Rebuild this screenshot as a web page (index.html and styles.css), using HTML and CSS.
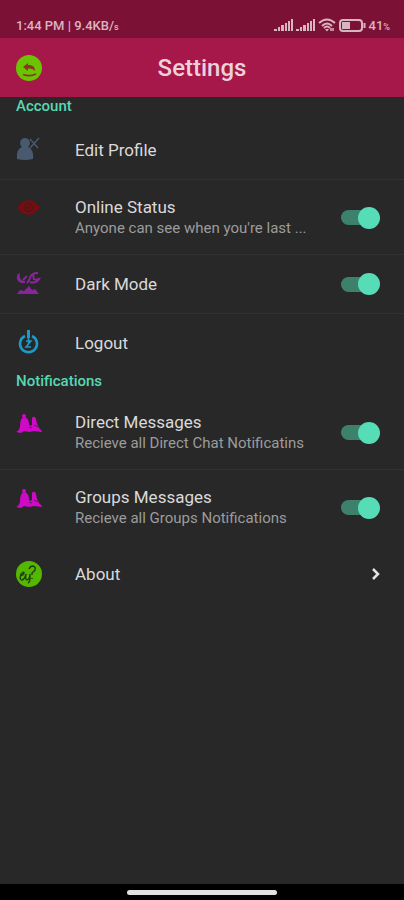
FILE: index.html
```html
<!DOCTYPE html>
<html lang="en">
<head>
  <meta charset="UTF-8" />
  <meta name="viewport" content="width=device-width, initial-scale=1" />
  <title>Settings</title>
  <link rel="stylesheet" href="styles.css">
</head>
<body>

  <div class="status-bar">
    <span>1:44 PM | 9.4KB/<small>s</small></span>
    <div class="status-icons">
      <svg width="19" height="12" viewBox="0 0 19 12" fill="currentColor">
        <path d="M0 10h3v2H0zM4 8h2v4H4zM7 6h3v6H7zM11 4h2v8h-2zM14 2h2v10h-2zM17 0h2v12h-2z"/>
      </svg>
      <svg width="19" height="12" viewBox="0 0 19 12" fill="currentColor">
        <path d="M0 10h3v2H0zM4 8h2v4H4zM7 6h3v6H7zM11 4h2v8h-2zM14 2h2v10h-2zM17 0h2v12h-2z"/>
      </svg>
      <svg width="18" height="14" viewBox="0 0 18 14" fill="none" stroke="currentColor" stroke-width="2">
        <path d="M1 5Q9-2 17 5M4 8Q9 3 14 8M6 10Q9 7 12 10"/>
        <path d="M7 11h4l-2 2.500z" fill="currentColor" stroke="none"/>
        <path d="M13 10v3M15 10v3" stroke-width="1.500"/>
      </svg>
      <svg width="27" height="13" viewBox="0 0 27 13" fill="none" stroke="currentColor" stroke-width="2">
        <rect x="1" y="1" width="22" height="11" rx="3"/>
        <path d="M3 3h8v7H3z" fill="currentColor" stroke="none"/>
        <path d="M25.500 4v5"/>
      </svg>
      <span>41<small>%</small></span>
    </div>
  </div>

  <header class="app-bar">
    <button class="back" type="button" aria-label="Back">
      <svg width="26" height="26" viewBox="0 0 26 26">
        <circle cx="13" cy="13" r="13" fill="#6bc400"/>
        <path d="M7 12l5-4v2c5 0 7 2 7 6-2-2-4-2.500-7-2.500V16z" fill="#8b3526"/>
        <path d="M7 19.500q7 2.500 13-.5" fill="none" stroke="#8b3526" stroke-width="1.800"/>
      </svg>
    </button>
    <h1>Settings</h1>
  </header>

  <main>
    <h2>Account</h2>
    <ul>
      <li>
        <a class="row" href="#profile">
          <svg class="icon" viewBox="0 0 26 26">
            <circle cx="9" cy="6" r="5" fill="#485970"/>
            <path d="M1 22q-1-10 5-12h6q6 2 5 12-8 2-16 0z" fill="#485970"/>
            <path d="M14 2l8 9M23 1l-9 10" stroke="#485970" stroke-width="1.500"/>
          </svg>
          <span class="text"><span class="title">Edit Profile</span></span>
        </a>
      </li>
      <li>
        <label class="row two-line">
          <svg class="icon" viewBox="0 0 26 26">
            <path d="M1 12.500Q12-2 24 12.500 12 27 1 12.500z" fill="#780d10"/>
            <circle cx="12.500" cy="12.500" r="4" fill="none" stroke="#4a1819" stroke-width="1.500"/>
            <circle cx="12.500" cy="12.500" r="1.500" fill="#4a1819"/>
          </svg>
          <span class="text">
            <span class="title">Online Status</span>
            <span class="subtitle">Anyone can see when you're last ...</span>
          </span>
          <input class="switch" type="checkbox" checked>
        </label>
      </li>
      <li>
        <label class="row">
          <svg class="icon" viewBox="0 0 26 26" fill="#8a249c">
            <path d="M4 2Q0 3 1 8q2 5 8 4v-2Q5 10 4 7q-1-3 0-5z"/>
            <path d="M1 23l3-4 4 1 5-5 3 4 3-1 4 5z"/>
            <path d="M22 2q-7 0-8 5-1 3-3 5M14 11q6 2 9-3l-4 1M17 3l1 6" fill="none" stroke="#8a249c" stroke-width="2"/>
            <path d="M7 9l4-4" stroke="#8a249c" stroke-width="2"/>
          </svg>
          <span class="text"><span class="title">Dark Mode</span></span>
          <input class="switch" type="checkbox" checked>
        </label>
      </li>
      <li>
        <a class="row" href="#logout">
          <svg class="icon" viewBox="0 0 26 26" fill="none" stroke="#1d9ac6">
            <path d="M9 6a8.500 8.500 0 1 0 7 0" stroke-width="2.500"/>
            <path d="M12.500 0v8" stroke-width="3"/>
            <path d="M10 11h5l-5 6h5M12.500 8v6" stroke-width="1.500"/>
          </svg>
          <span class="text"><span class="title">Logout</span></span>
        </a>
      </li>
    </ul>

    <h2>Notifications</h2>
    <ul>
      <li>
        <label class="row two-line">
          <svg class="icon bells" viewBox="0 0 26 26" fill="#d008c8">
            <circle cx="8" cy="4" r="2"/>
            <path d="M0 20q4-2 4-6 0-8 4-9 5 1 5 7l1 2 2-1V6q1-2 3-1 1 1 2 7l2 4 3 3v1l-8-1-5 1-5-1-3 2z"/>
            <path d="M13 15l3 1M18 13l4 2" stroke="#282828" stroke-width=".7"/>
          </svg>
          <span class="text">
            <span class="title">Direct Messages</span>
            <span class="subtitle">Recieve all Direct Chat Notificatins</span>
          </span>
          <input class="switch" type="checkbox" checked>
        </label>
      </li>
      <li>
        <label class="row two-line">
          <svg class="icon bells" viewBox="0 0 26 26" fill="#d008c8">
            <circle cx="8" cy="4" r="2"/>
            <path d="M0 20q4-2 4-6 0-8 4-9 5 1 5 7l1 2 2-1V6q1-2 3-1 1 1 2 7l2 4 3 3v1l-8-1-5 1-5-1-3 2z"/>
            <path d="M13 15l3 1M18 13l4 2" stroke="#282828" stroke-width=".7"/>
          </svg>
          <span class="text">
            <span class="title">Groups Messages</span>
            <span class="subtitle">Recieve all Groups Notifications</span>
          </span>
          <input class="switch" type="checkbox" checked>
        </label>
      </li>
    </ul>

    <a class="row" href="#about">
      <svg class="icon" viewBox="0 0 26 26">
        <circle cx="13" cy="13" r="13" fill="#55b800"/>
        <path d="M4 15q4-1 4-3t-3 1q-2 6 1 6 3-1 4-6-1 6 1 6 3-1 3-6v5q0 3-2 4M13 8q1-3 4-3 3 1 2 4l-3 3v2M16 17v1" fill="none" stroke="#203f12" stroke-width="1.400"/>
      </svg>
      <span class="text"><span class="title">About</span></span>
      <svg class="chevron" width="10" height="14" viewBox="0 0 10 14" fill="none" stroke="#e4e4e4" stroke-width="2.500">
        <path d="M3 2l5 5-5 5"/>
      </svg>
    </a>
  </main>

  <div class="nav-bar"><div class="handle"></div></div>

</body>
</html>
```

FILE: styles.css
```css
* {
  box-sizing: border-box;
}
body {
  display: flex;
  flex-direction: column;
  min-height: 100vh;
  margin: 0;
  background: #282828;
  color: #dadada;
  font-family: Roboto, sans-serif;
}
.status-bar {
  display: flex;
  align-items: center;
  justify-content: space-between;
  height: 38px;
  padding: 12px 14px 0 16px;
  background: #7b1235;
  color: #d9b5c1;
  font-size: 13px;
  font-weight: 500;
}
.status-bar small {
  font-size: 9px;
}
.status-icons {
  display: flex;
  align-items: center;
  gap: 3px;
}
.app-bar {
  display: grid;
  grid-template-columns: 26px 1fr 26px;
  align-items: center;
  height: 59px;
  padding: 0 16px;
  background: #a61849;
}
.back {
  height: 26px;
  padding: 0;
  border: 0;
  background: none;
}
h1 {
  margin: 0;
  color: #ecd1da;
  font-size: 24px;
  font-weight: 500;
  text-align: center;
}
main {
  flex: 1;
}
h2 {
  height: 23px;
  margin: 0;
  padding: 0 16px;
  color: #57d8b4;
  font-size: 15px;
  font-weight: 500;
  line-height: 18px;
}
ul {
  margin: 0;
  padding: 0;
  list-style: none;
}
li + li {
  border-top: 1px solid #323232;
}
.row {
  display: flex;
  align-items: center;
  min-height: 59px;
  padding: 0 24px 0 16px;
  color: inherit;
  text-decoration: none;
}
li + li .row {
  min-height: 58px;
}
.row.two-line,
li + li .two-line {
  min-height: 74px;
  padding-top: 1px;
}
.icon {
  flex: none;
  width: 26px;
  height: 26px;
  margin-right: 33px;
}
.two-line .icon {
  align-self: flex-start;
  margin-top: 14px;
}
.two-line .bells {
  margin-top: 16px;
}
.text {
  flex: 1;
  min-width: 0;
  margin-right: 32px;
}
.title,
.subtitle {
  display: block;
}
.title {
  font-size: 17px;
  line-height: 22px;
}
.subtitle {
  color: #9c9c9c;
  font-size: 15px;
  line-height: 21px;
}
.switch {
  flex: none;
  display: grid;
  align-items: center;
  width: 39px;
  height: 22px;
  margin: 0;
  appearance: none;
}
.switch::before,
.switch::after {
  content: "";
  grid-area: 1 / 1;
}
.switch::before {
  width: 34px;
  height: 15px;
  border-radius: 8px;
  background: #3d816d;
}
.switch::after {
  justify-self: end;
  width: 22px;
  height: 22px;
  border-radius: 50%;
  background: #57dcb8;
}
.switch:not(:checked)::after {
  justify-self: start;
}
.nav-bar {
  display: flex;
  align-items: center;
  justify-content: center;
  height: 16px;
  background: #000;
}
.handle {
  width: 37%;
  height: 5px;
  border-radius: 3px;
  background: #e2e2e2;
}
```
